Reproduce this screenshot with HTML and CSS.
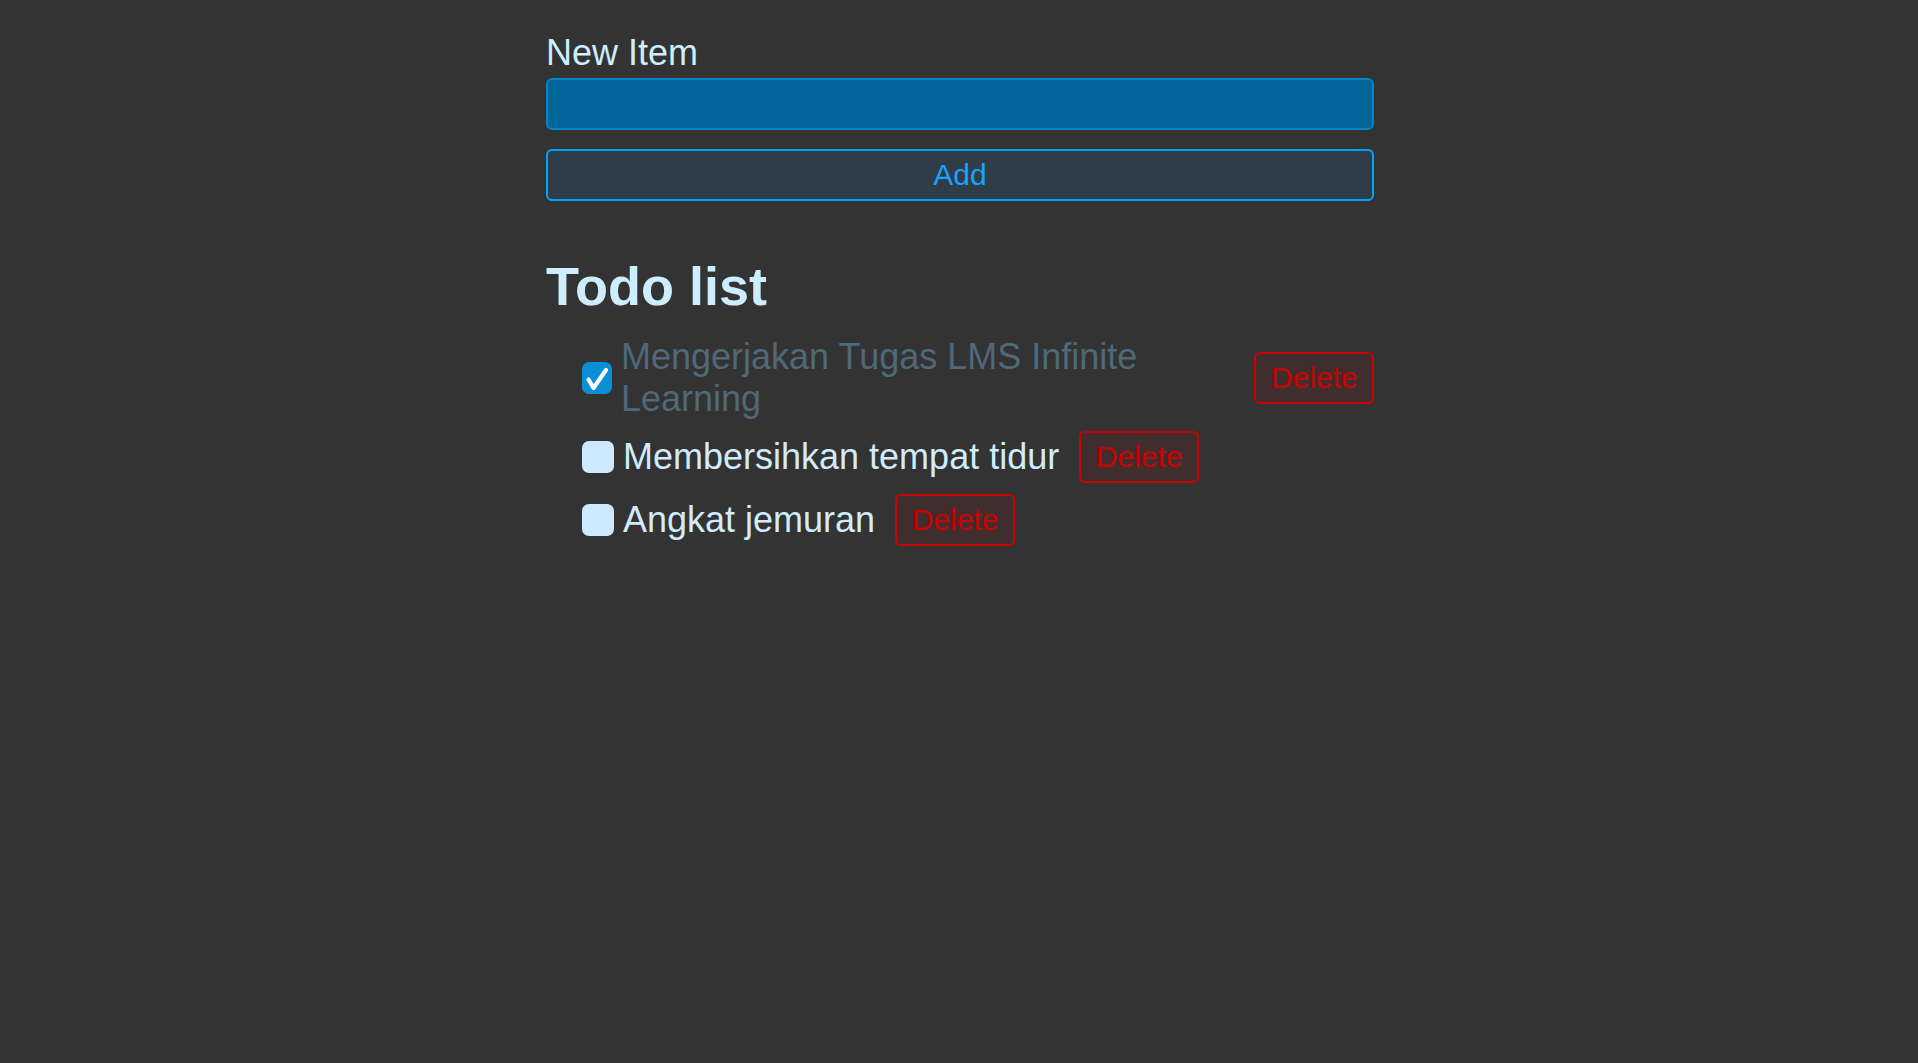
FILE: index.html
```html
<!DOCTYPE html>
<html lang="id">
<head>
<meta charset="utf-8">
<title>Todo list</title>
<link rel="stylesheet" href="styles.css">
</head>
<body>
<main class="app">
  <form class="new-form">
    <label class="new-label" for="item">New Item</label>
    <input class="new-input" type="text" id="item">
    <button class="add-btn" type="button">Add</button>
  </form>
  <h1 class="title">Todo list</h1>
  <ul class="list">
    <li class="item">
      <span class="box box--checked" role="checkbox" aria-checked="true">
        <svg viewBox="0 0 30 32" width="30" height="32" aria-hidden="true">
          <path d="M6.5 17.5 L11.5 26 L24 8" fill="none" stroke="#ffffff" stroke-width="4.2" stroke-linecap="round" stroke-linejoin="round"/>
        </svg>
      </span>
      <span class="text text--done">Mengerjakan Tugas LMS Infinite Learning</span>
      <button class="del-btn" type="button">Delete</button>
    </li>
    <li class="item">
      <span class="box" role="checkbox" aria-checked="false"></span>
      <span class="text">Membersihkan tempat tidur</span>
      <button class="del-btn" type="button">Delete</button>
    </li>
    <li class="item">
      <span class="box" role="checkbox" aria-checked="false"></span>
      <span class="text">Angkat jemuran</span>
      <button class="del-btn" type="button">Delete</button>
    </li>
  </ul>
</main>
</body>
</html>
```
FILE: styles.css
```css
html, body {
  margin: 0;
  padding: 0;
  background: #333333;
}

body {
  font-family: "Liberation Sans", Arial, sans-serif;
  color: #cdeeff;
  padding-left: 2px;
}

.app {
  width: 828px;
  margin: 0 auto;
  padding-top: 32px;
}

.new-form {
  display: flex;
  flex-direction: column;
}

.new-label {
  font-size: 36px;
  line-height: normal;
  color: #cdeeff;
  margin-bottom: 4px;
}

.new-input {
  box-sizing: border-box;
  width: 100%;
  height: 52px;
  margin: 0;
  border: 2px solid #0085c8;
  border-radius: 6px;
  background: #006699;
  outline: none;
  font-family: inherit;
  font-size: 30px;
  color: #ffffff;
}

.add-btn {
  box-sizing: border-box;
  width: 100%;
  height: 52px;
  margin-top: 19px;
  border: 2px solid #00a2ff;
  border-radius: 6px;
  background: #2e3d47;
  color: #19a3ff;
  font-family: inherit;
  font-size: 30px;
  padding: 0;
}

.title {
  font-size: 54px;
  font-weight: bold;
  line-height: normal;
  color: #cdeeff;
  margin: 54px 0 19px;
}

.list {
  list-style: none;
  margin: 0;
  padding: 0 0 0 36px;
  display: flex;
  flex-direction: column;
  gap: 11px;
}

.item {
  display: flex;
  align-items: center;
}

.box {
  flex-shrink: 0;
  box-sizing: border-box;
  width: 32px;
  height: 32px;
  margin-right: 9px;
  border-radius: 7px;
  background: #cce9ff;
  display: flex;
  align-items: center;
  justify-content: center;
}

.box--checked {
  width: 30px;
  background: #0a8fd6;
}

.text {
  font-size: 36px;
  line-height: normal;
  color: #d0ecff;
}

.text--done {
  color: #4e6979;
}

.del-btn {
  flex-shrink: 0;
  box-sizing: border-box;
  height: 52px;
  margin-left: 20px;
  padding: 0 14.5px;
  border: 2px solid #cc0000;
  border-radius: 6px;
  background: #402e2e;
  color: #cc0000;
  font-family: inherit;
  font-size: 30px;
}
```
